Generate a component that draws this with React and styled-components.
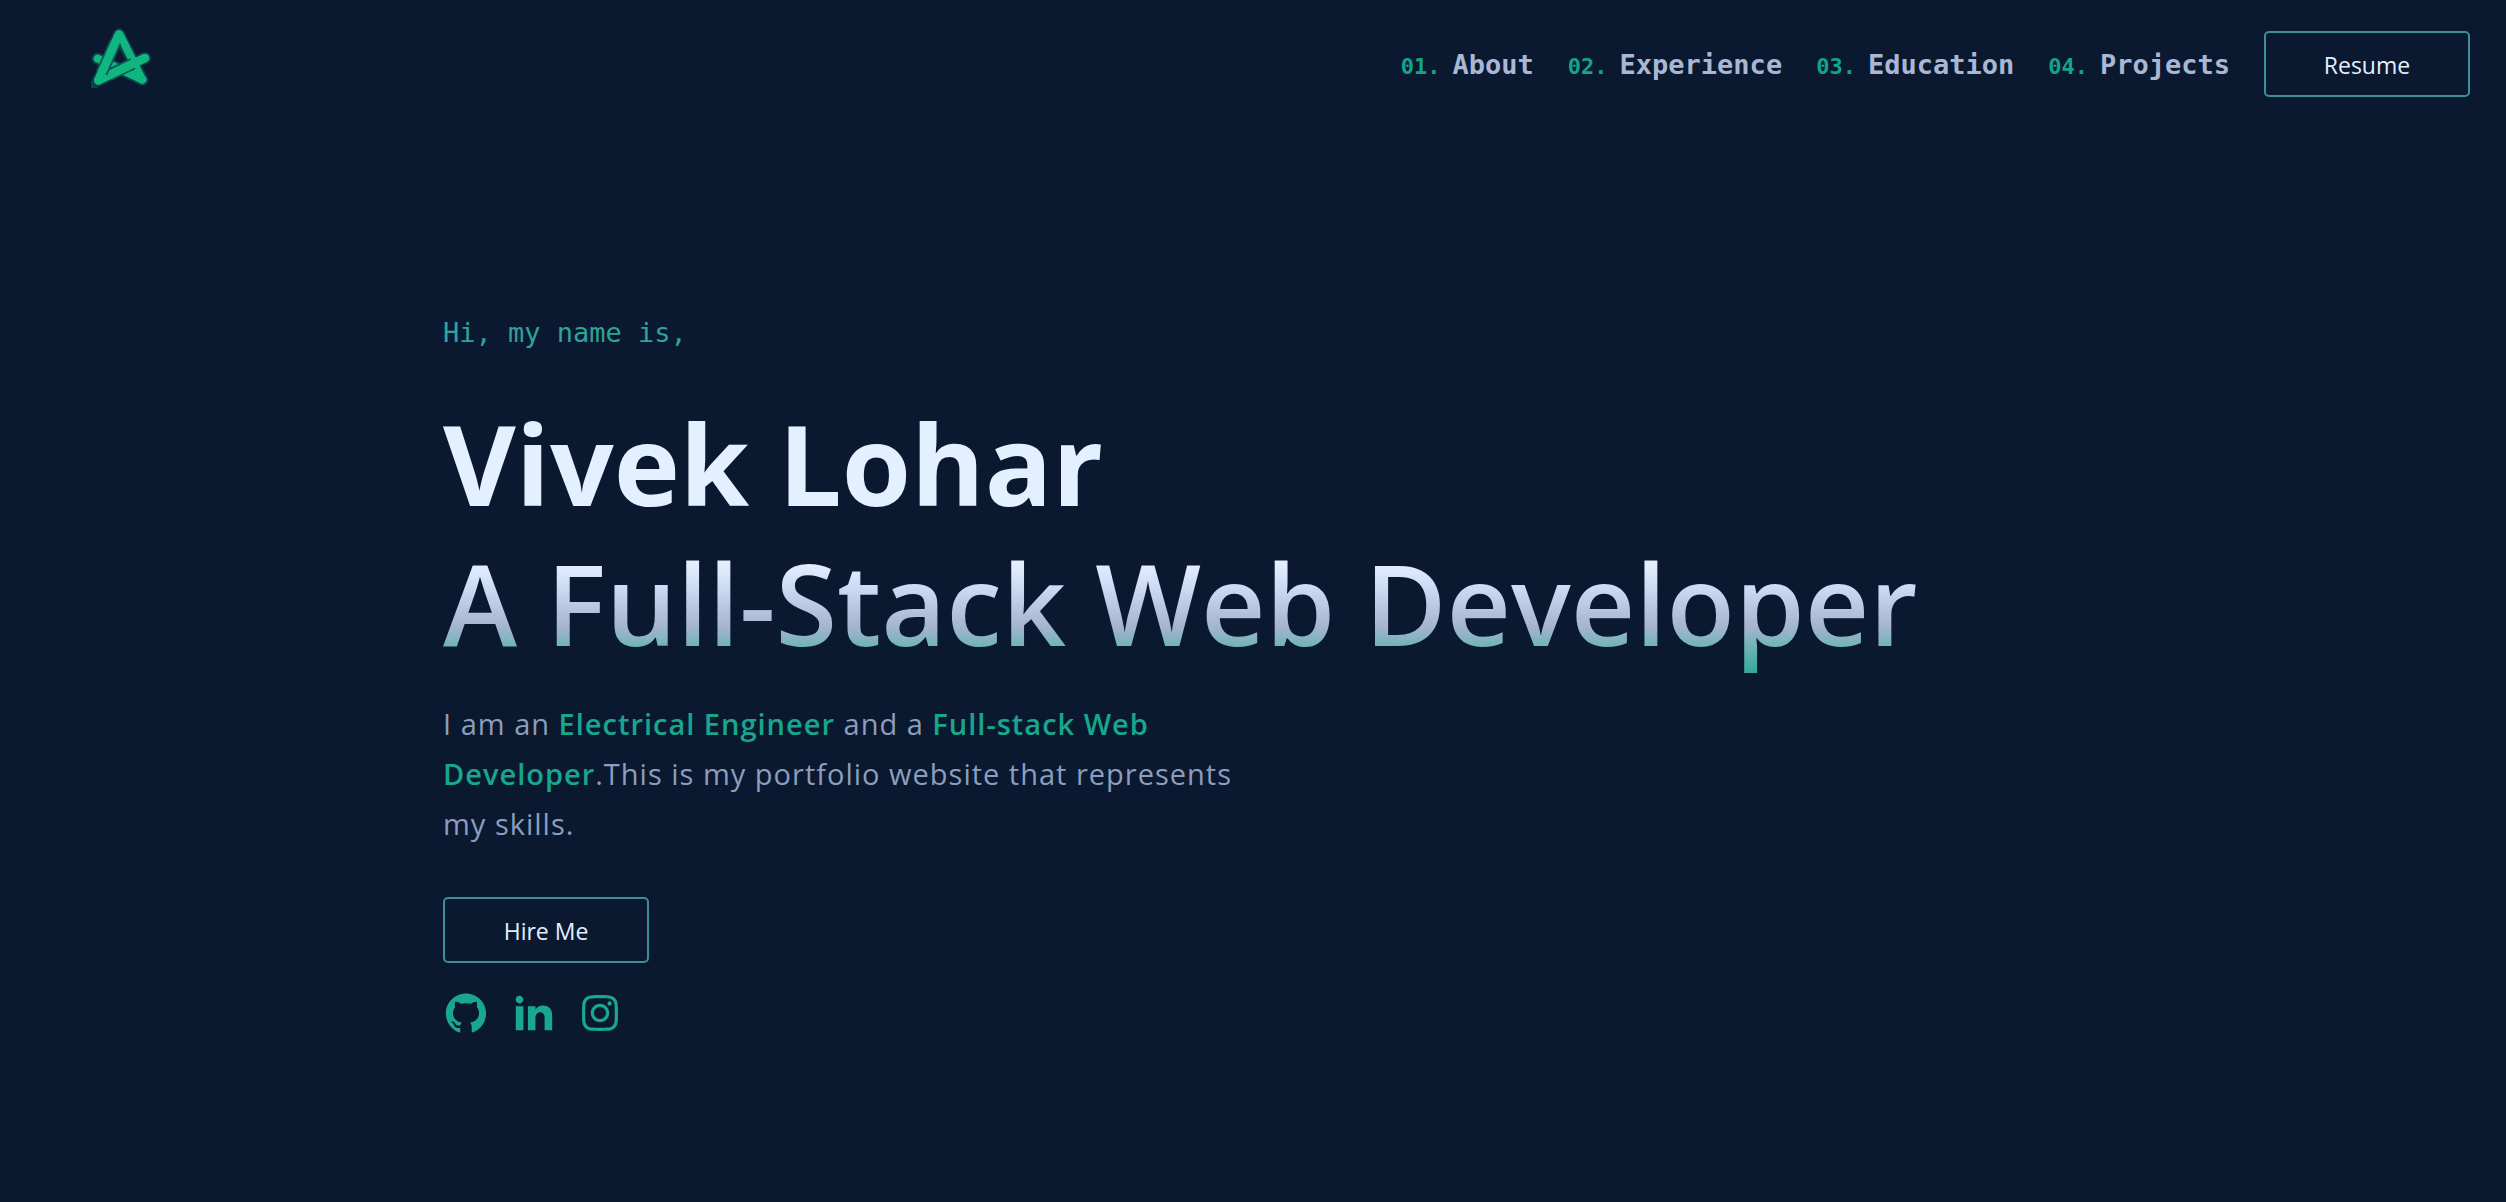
import React from "react";
import styled, { createGlobalStyle } from "styled-components";
import { AiFillGithub, AiOutlineInstagram } from "react-icons/ai";
import { RiLinkedinFill } from "react-icons/ri";

const sans = '"Open Sans", "Noto Sans", sans-serif';
const mono = '"DejaVu Sans Mono", monospace';

const GlobalStyle = createGlobalStyle`
  *, *::before, *::after { box-sizing: border-box; }
  body {
    margin: 0;
    background: #0a192f;
    color: #8c9dbd;
    font-family: ${sans};
  }
`;

const Page = styled.div`
  min-height: 100vh;
`;

const Header = styled.header`
  display: flex;
  align-items: center;
  justify-content: space-between;
  height: 128px;
  padding: 0 36px 0 91px;
`;

const LogoLink = styled.a`
  display: block;
  margin-bottom: 14px;
  svg { display: block; }
`;

const Nav = styled.nav`
  display: flex;
  align-items: center;
  gap: 34px;
`;

const NavList = styled.ol`
  display: flex;
  gap: 34px;
  margin: 0;
  padding: 4px 0 0;
  list-style: none;
`;

const NavLink = styled.a`
  display: flex;
  align-items: baseline;
  gap: 12px;
  color: #a8b8d4;
  font: 700 27px/36px ${mono};
  text-decoration: none;
`;

const NavNumber = styled.span`
  color: #14a38b;
  font-size: 22px;
`;

const OutlineButton = styled.button`
  width: 206px;
  height: 66px;
  padding: 2px 0 0;
  border: 2px solid #3d8f92;
  border-radius: 5px;
  background: transparent;
  color: #e2efff;
  font: 400 23px/32px ${sans};
  cursor: pointer;
`;

const Hero = styled.main`
  display: flex;
  flex-direction: column;
  align-items: flex-start;
  padding: 187px 36px 0 443px;
`;

const Greeting = styled.p`
  margin: 0;
  color: #2fa39a;
  font: 400 27px/36px ${mono};
`;

const Name = styled.h1`
  margin: 42px 0 0;
  color: #e2f0ff;
  font-size: 112px;
  font-weight: 700;
  line-height: 140px;
`;

const Role = styled.h2`
  margin: 0;
  background: linear-gradient(#e6f1ff 20%, #ccd9f3 40%, #a8b5d1 66%, #74b3b9 80%, #35a89a 100%);
  background-clip: text;
  -webkit-background-clip: text;
  color: transparent;
  font-size: 112px;
  font-weight: 600;
  line-height: 140px;
`;

const Intro = styled.p`
  max-width: 800px;
  margin: 26px 0 0;
  font-size: 29px;
  line-height: 50px;
  letter-spacing: 1px;
`;

const Highlight = styled.strong`
  color: #18a68c;
  font-weight: 600;
`;

const Actions = styled.div`
  margin-top: 48px;
`;

const Social = styled.div`
  display: flex;
  gap: 21px;
  margin-top: 27px;
`;

const SocialLink = styled.a`
  display: flex;
  color: #1aa790;
`;

function Logo() {
  return (
    <svg width="60" height="62" viewBox="96 49 180 186" fill="none" strokeLinecap="round" aria-hidden="true">
      <g stroke="#0d3f48" strokeWidth="36">
        <path d="M180 74 118 212 258 145M180 74 250 210M116 147 250 210" />
      </g>
      <path d="M116 147 250 210" stroke="#10b57f" strokeWidth="24" />
      <path d="M184 78 250 210" stroke="#10b57f" strokeWidth="24" />
      <path d="M150 196 222 162" stroke="#0b5650" strokeWidth="36" strokeLinecap="butt" />
      <path d="M118 212 258 145" stroke="#10b57f" strokeWidth="26" />
      <path d="M170 96 128 190" stroke="#0b5650" strokeWidth="36" strokeLinecap="butt" />
      <path d="M180 74 118 212" stroke="#10b57f" strokeWidth="26" />
    </svg>
  );
}

const sections = ["About", "Experience", "Education", "Projects"];

const socials = [
  { label: "GitHub", Icon: AiFillGithub },
  { label: "LinkedIn", Icon: RiLinkedinFill },
  { label: "Instagram", Icon: AiOutlineInstagram },
];

export default function App() {
  return (
    <Page>
      <GlobalStyle />
      <Header>
        <LogoLink href="#home" aria-label="Home">
          <Logo />
        </LogoLink>
        <Nav>
          <NavList>
            {sections.map((name, i) => (
              <li key={name}>
                <NavLink href={`#${name.toLowerCase()}`}>
                  <NavNumber>{`0${i + 1}.`}</NavNumber>
                  <span>{name}</span>
                </NavLink>
              </li>
            ))}
          </NavList>
          <OutlineButton type="button">Resume</OutlineButton>
        </Nav>
      </Header>
      <Hero id="home">
        <Greeting>Hi, my name is,</Greeting>
        <Name>Vivek Lohar</Name>
        <Role>A Full-Stack Web Developer</Role>
        <Intro>
          I am an <Highlight>Electrical Engineer</Highlight> and a{" "}
          <Highlight>Full-stack Web Developer</Highlight>.This is my portfolio
          website that represents my skills.
        </Intro>
        <Actions>
          <OutlineButton type="button">Hire Me</OutlineButton>
        </Actions>
        <Social>
          {socials.map(({ label, Icon }) => (
            <SocialLink key={label} href={`#${label.toLowerCase()}`} aria-label={label}>
              <Icon size={46} />
            </SocialLink>
          ))}
        </Social>
      </Hero>
    </Page>
  );
}
